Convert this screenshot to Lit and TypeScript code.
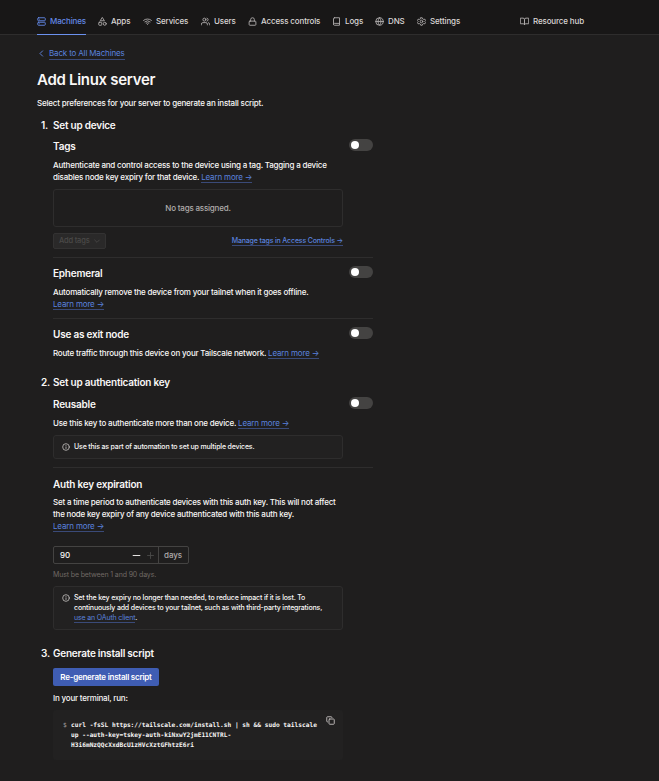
import { LitElement, html, css, svg } from "lit";
import { customElement, property } from "lit/decorators.js";

const icons: Record<string, unknown> = {
  machines: svg`<rect x="2" y="2" width="20" height="8" rx="2"/><rect x="2" y="14" width="20" height="8" rx="2"/><path d="M6 6h.01M6 18h.01"/>`,
  apps: svg`<path d="M12 2l5 8H7z"/><rect x="2" y="14" width="8" height="8" rx="1.5"/><circle cx="18" cy="18" r="4"/>`,
  services: svg`<path d="M1.5 9a16 16 0 0 1 21 0M5 12.8a11 11 0 0 1 14 0M8.5 16.3a6 6 0 0 1 7 0M12 20h.01"/>`,
  users: svg`<path d="M17 21v-2a4 4 0 0 0-4-4H5a4 4 0 0 0-4 4v2"/><circle cx="9" cy="7" r="4"/><path d="M23 21v-2a4 4 0 0 0-3-3.87M16 3.13a4 4 0 0 1 0 7.75"/>`,
  lock: svg`<rect x="3" y="11" width="18" height="11" rx="2"/><path d="M7 11V7a5 5 0 0 1 10 0v4"/>`,
  logs: svg`<path d="M4 19.5A2.5 2.5 0 0 1 6.500 17H20"/><path d="M6.500 2H20v20H6.500A2.500 2.500 0 0 1 4 19.500v-15A2.500 2.500 0 0 1 6.500 2z"/>`,
  dns: svg`<circle cx="12" cy="12" r="10"/><path d="M2 12h20M12 2a15.300 15.300 0 0 1 4 10 15.300 15.300 0 0 1-4 10 15.300 15.300 0 0 1-4-10 15.300 15.300 0 0 1 4-10z"/>`,
  settings: svg`<path d="M10 2h4l1 3 3 1.500 3-.7 2 3.500-2 2.200v1l2 2.200-2 3.500-3-.7L15 19l-1 3h-4l-1-3-3-1.500-3 .7-2-3.500 2-2.200v-1L1 9.300l2-3.500 3 .7L9 5z"/><circle cx="12" cy="12" r="3.500"/>`,
  book: svg`<path d="M2 3h6a4 4 0 0 1 4 4v14a3 3 0 0 0-3-3H2zM22 3h-6a4 4 0 0 0-4 4v14a3 3 0 0 1 3-3h7z"/>`,
  left: svg`<path d="M15 19l-7-7 7-7"/>`,
  down: svg`<path d="M5 9l7 7 7-7"/>`,
  info: svg`<circle cx="12" cy="12" r="10"/><path d="M12 16.500v-5M12 7.500h.01"/>`,
  minus: svg`<path d="M3 12h18"/>`,
  plus: svg`<path d="M4 12h16M12 4v16"/>`,
  copy: svg`<rect x="8" y="8" width="14" height="14" rx="2"/><path d="M4 16a2 2 0 0 1-2-2V4a2 2 0 0 1 2-2h10a2 2 0 0 1 2 2"/>`,
};

@customElement("ui-icon")
class UiIcon extends LitElement {
  @property() name = "";
  static styles = css`
    :host { display: block; width: 9px; height: 9px; flex: none; }
    svg { display: block; width: 100%; height: 100%; fill: none; stroke: currentColor; stroke-width: 2.4; stroke-linecap: round; stroke-linejoin: round; }
  `;
  render() {
    return html`<svg viewBox="0 0 24 24">${icons[this.name]}</svg>`;
  }
}

@customElement("ui-toggle")
class UiToggle extends LitElement {
  static styles = css`
    :host { display: flex; align-items: center; box-sizing: border-box; width: 24px; height: 12px; padding-left: 2px; border-radius: 6px; background: #444342; flex: none; }
    .knob { width: 8px; height: 8px; border-radius: 50%; background: #fff; }
  `;
  render() {
    return html`<div class="knob"></div>`;
  }
}

const nav = [
  ["machines", "Machines", 36],
  ["apps", "Apps", 20],
  ["services", "Services", 33],
  ["users", "Users", 22],
  ["lock", "Access controls", 59],
  ["logs", "Logs", 18],
  ["dns", "DNS", 17],
  ["settings", "Settings", 29],
] as const;

@customElement("app-root")
class AppRoot extends LitElement {
  static styles = css`
    :host { display: block; height: 781px; overflow: hidden; background: #1f1e1e; color: #f9f7f6; font: 500 8px/12px Inter, sans-serif; letter-spacing: -.2px; }
    * { box-sizing: border-box; }
    header { display: flex; height: 35px; padding: 8px 0 0 37px; background: #181717; border-bottom: 1px solid #2e2d2d; color: #dad6d5; letter-spacing: -.14px; }
    .tab { display: flex; align-items: center; gap: 4px; height: 27px; margin-right: 12px; white-space: nowrap; border-bottom: 1px solid transparent; }
    .tab ui-icon { color: #afacab; }
    .tab.on, .tab.on ui-icon { color: #6389e6; }
    .tab.on { border-color: #6b91ef; }
    .hub { margin-left: 49px; }
    main { padding: 0 0 0 37px; width: 373px; }
    a { color: #5a82de; border-bottom: 1px solid #3a4a78; font-weight: 400; letter-spacing: -.16px; }
    .back { display: flex; align-items: center; height: 12px; margin-top: 12px; color: #6389e6; gap: 3px; }
    h1 { margin: 12px 0 0; height: 18px; font: 600 15px/18px Inter, sans-serif; letter-spacing: -.3px; }
    .intro { margin-top: 8px; }
    h2 { display: flex; margin: 10px 0 0 4px; height: 12px; font: 600 10px/12px Inter, sans-serif; letter-spacing: -.23px; }
    .num { width: 12px; }
    .body { padding-left: 16px; }
    h3 { margin: 0; font: 600 10px/12px Inter, sans-serif; letter-spacing: -.22px; }
    .row { display: flex; justify-content: space-between; height: 13px; }
    .row h3 { padding-top: 1px; }
    .text { white-space: nowrap; }
    .divider { height: 1px; background: #2e2d2d; }
    .panel { width: 290px; border: 1px solid #2e2d2d; border-radius: 3px; }
    .empty { height: 38px; margin-top: 6px; text-align: center; line-height: 36px; color: #afacab; }
    .actions { display: flex; justify-content: space-between; align-items: center; width: 290px; height: 16px; margin-top: 6px; }
    .add { display: flex; align-items: center; gap: 4px; width: 53px; height: 16px; padding-left: 5px; background: #2a2929; border: 1px solid #333232; border-radius: 2px; color: #4a4948; white-space: nowrap; font-size: 7.500px; }
    .add ui-icon { width: 8px; height: 8px; }
    .small, .small a { font-size: 7px; line-height: 10px; letter-spacing: -.16px; }
    .manage a { font-weight: 500; }
    .note { display: flex; gap: 4px; padding: 6px 8px; background: #222121; }
    .note ui-icon { width: 8px; height: 8px; margin-top: 1px; color: #c5c1c0; }
    .field { display: flex; width: 136px; height: 18px; margin-top: 14px; border: 1px solid #444342; border-radius: 2px; align-items: center; }
    .value { width: 76px; padding-left: 6px; letter-spacing: 0; }
    .step { margin: 0 2px; }
    .dim { color: #4a4948; margin-left: 3px; }
    .unit { margin-left: auto; width: 30px; height: 16px; line-height: 16px; padding-left: 5px; border-left: 1px solid #444342; color: #afacab; letter-spacing: -.05px; }
    .hint { margin-top: 6px; color: #706965; font-weight: 400; letter-spacing: -.13px; }
    .generate { width: 106px; height: 18px; margin-top: 9px; border-radius: 2px; background: #3f5db3; text-align: center; font-weight: 600; line-height: 18px; white-space: nowrap; color: #fff; letter-spacing: -.23px; }
    .code { display: flex; height: 50px; margin-top: 6px; padding: 10px 8px 0 10px; border-radius: 3px; background: #222121; font: 700 6.200px/10px "DejaVu Sans Mono", monospace; letter-spacing: 0; white-space: nowrap; }
    .prompt { width: 8px; color: #a5a1a0; font-weight: 400; }
    .cmd { flex: 1; }
    .code ui-icon { margin-top: -4px; color: #c5c1c0; }
  `;

  more() {
    return html`<a>Learn more →</a>`;
  }

  render() {
    return html`
      <header>
        ${nav.map(([icon, label, width], i) => html`<div class="tab ${i === 0 ? "on" : ""}"><ui-icon name=${icon}></ui-icon><span style="width:${width}px">${label}</span></div>`)}
        <div class="tab hub"><ui-icon name="book"></ui-icon><span>Resource hub</span></div>
      </header>
      <main>
        <div class="back"><ui-icon name="left"></ui-icon><a>Back to All Machines</a></div>
        <h1>Add Linux server</h1>
        <div class="intro text">Select preferences for your server to generate an install script.</div>

        <h2 style="margin-top:10px"><span class="num">1.</span>Set up device</h2>
        <div class="body">
          <div class="row" style="margin-top:8px"><h3>Tags</h3><ui-toggle></ui-toggle></div>
          <div class="text" style="margin-top:7px">Authenticate and control access to the device using a tag. Tagging a device<br>disables node key expiry for that device. ${this.more()}</div>
          <div class="panel empty">No tags assigned.</div>
          <div class="actions"><div class="add"><span>Add tags</span><ui-icon name="down"></ui-icon></div><span class="small manage"><a>Manage tags in Access Controls →</a></span></div>
          <div class="divider" style="margin-top:8px"></div>
          <div class="row" style="margin-top:8px"><h3>Ephemeral</h3><ui-toggle></ui-toggle></div>
          <div class="text" style="margin-top:7px">Automatically remove the device from your tailnet when it goes offline.<br>${this.more()}</div>
          <div class="divider" style="margin-top:8px"></div>
          <div class="row" style="margin-top:8px"><h3>Use as exit node</h3><ui-toggle></ui-toggle></div>
          <div class="text" style="margin-top:7px">Route traffic through this device on your Tailscale network. ${this.more()}</div>
        </div>

        <h2 style="margin-top:17px"><span class="num">2.</span>Set up authentication key</h2>
        <div class="body">
          <div class="row" style="margin-top:9px"><h3>Reusable</h3><ui-toggle></ui-toggle></div>
          <div class="text" style="margin-top:7px">Use this key to authenticate more than one device. ${this.more()}</div>
          <div class="panel note small" style="margin-top:6px;height:24px"><ui-icon name="info"></ui-icon><span>Use this as part of automation to set up multiple devices.</span></div>
          <div class="divider" style="margin-top:8px"></div>
          <h3 style="margin-top:10px">Auth key expiration</h3>
          <div class="text" style="margin-top:6px">Set a time period to authenticate devices with this auth key. This will not affect<br>the node key expiry of any device authenticated with this auth key.<br>${this.more()}</div>
          <div class="field"><span class="value">90</span><ui-icon class="step" name="minus"></ui-icon><ui-icon class="step dim" name="plus"></ui-icon><span class="unit">days</span></div>
          <div class="hint small">Must be between 1 and 90 days.</div>
          <div class="panel note small text" style="margin-top:6px;height:44px"><ui-icon name="info"></ui-icon><span>Set the key expiry no longer than needed, to reduce impact if it is lost. To<br>continuously add devices to your tailnet, such as with third-party integrations,<br><a>use an OAuth client</a>.</span></div>
        </div>

        <h2 style="margin-top:17px"><span class="num">3.</span>Generate install script</h2>
        <div class="body">
          <div class="generate">Re-generate install script</div>
          <div class="text" style="margin-top:6px">In your terminal, run:</div>
          <div class="code panel" style="border:0"><span class="prompt">$</span><span class="cmd">curl -fsSL https://tailscale.com/install.sh | sh &amp;&amp; sudo tailscale<br>up --auth-key=tskey-auth-kiNxwY2jmE11CNTRL-<br>H3i6mNzQQcXxdBcU1zHVcXztGFhtzE6ri</span><ui-icon name="copy"></ui-icon></div>
        </div>
      </main>
    `;
  }
}
